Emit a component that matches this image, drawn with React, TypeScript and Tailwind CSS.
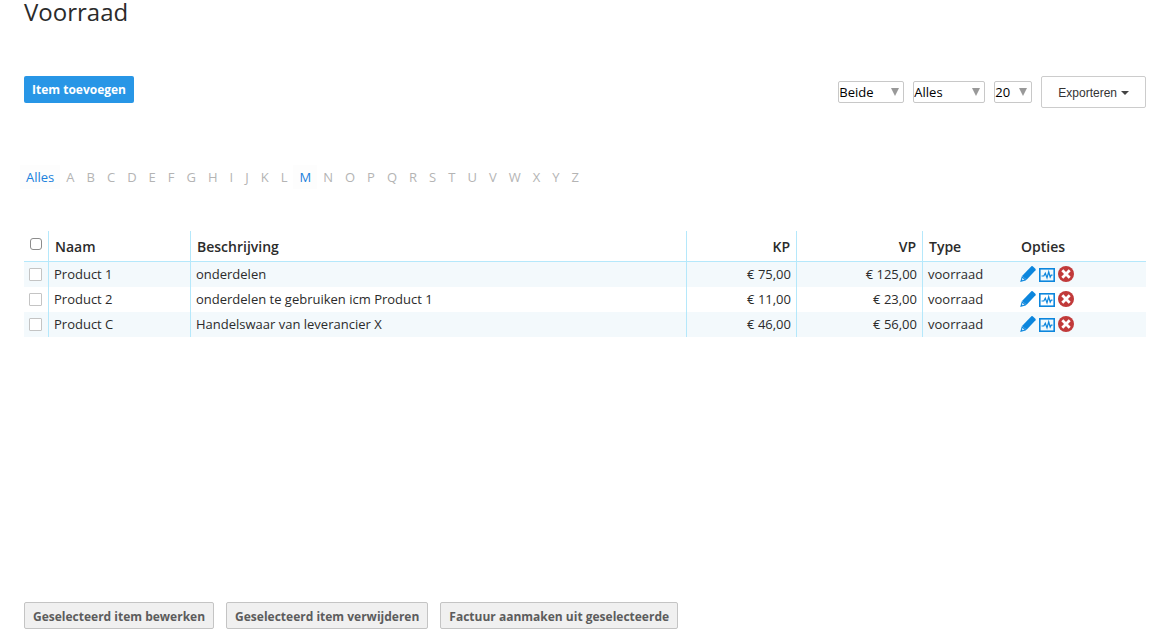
import { clsx } from "clsx";

type Product = {
  id: number;
  name: string;
  description: string;
  purchase: string;
  sale: string;
  type: string;
};

const PRODUCTS: Product[] = [
  { id: 1, name: "Product 1", description: "onderdelen", purchase: "€ 75,00", sale: "€ 125,00", type: "voorraad" },
  { id: 2, name: "Product 2", description: "onderdelen te gebruiken icm Product 1", purchase: "€ 11,00", sale: "€ 23,00", type: "voorraad" },
  { id: 3, name: "Product C", description: "Handelswaar van leverancier X", purchase: "€ 46,00", sale: "€ 56,00", type: "voorraad" },
];

const LETTERS = "ABCDEFGHIJKLMNOPQRSTUVWXYZ".split("");

const ACTIVE_LETTERS = ["M"];

const BULK_ACTIONS = ["Geselecteerd item bewerken", "Geselecteerd item verwijderen", "Factuur aanmaken uit geselecteerde"];

function PencilIcon() {
  return (
    <svg viewBox="0 0 16 16" className="h-4 w-4" fill="#0c86dd" aria-hidden="true">
      <path d="M11.4 0.3 Q12 -0.2 12.7 0.3 L15.4 2.8 Q16 3.5 15.5 4.2 L6.6 13.8 L2 9.9 Z" />
      <path d="M1.9 10 L6.5 13.8 L5.6 14.6 L0.2 15.9 Z" />
      <path d="M2.4 12 L4.5 13.8 L2.6 14.3 L1.8 13.6 Z" fill="#d5ebf9" />
    </svg>
  );
}

function GraphIcon() {
  return (
    <svg viewBox="0 0 16 14" className="h-3.5 w-4" fill="none" stroke="#0c86dd" aria-hidden="true">
      <rect x="0.8" y="0.8" width="14.4" height="12.4" strokeWidth="1.6" />
      <path d="M2.5 8 H4.8 L6.3 5.2 L8 9.8 L9.7 3.8 L11.2 9.2 L12.2 7.2 H13.5" strokeWidth="1.2" />
    </svg>
  );
}

function DeleteIcon() {
  return (
    <svg viewBox="0 0 16 16" className="h-4 w-4" aria-hidden="true">
      <circle cx="8" cy="8" r="8" fill="#c13a3a" />
      <path d="M4.3 4.3 L11.7 11.7 M11.7 4.3 L4.3 11.7" stroke="#fff" strokeWidth="2.8" />
    </svg>
  );
}

function FilterSelect({ label, options, className }: { label: string; options: string[]; className: string }) {
  return (
    <div className={clsx("relative h-[22px]", className)}>
      <select
        aria-label={label}
        className="h-full w-full appearance-none rounded-xs border border-[#c8c8c8] bg-white text-[13px] leading-5 text-black"
      >
        {options.map((o) => (
          <option key={o}>{o}</option>
        ))}
      </select>
      <svg viewBox="0 0 8 8" className="pointer-events-none absolute right-[5px] top-[7px] h-2 w-2" fill="#999" aria-hidden="true">
        <path d="M0 0 H8 L4 8 Z" />
      </svg>
    </div>
  );
}

function RowCheckbox({ label, header }: { label: string; header?: boolean }) {
  return (
    <input
      type="checkbox"
      aria-label={label}
      className={clsx(
        "block appearance-none border bg-white",
        header ? "mx-1.5 mb-1 h-3 w-3 rounded-[3px] border-[#8c8c8c]" : "mx-[5px] h-[13px] w-[13px] rounded-[1px] border-[#c4c4c4]",
      )}
    />
  );
}

export default function App() {
  return (
    <main className="bg-white px-6 font-['Open_Sans',sans-serif] text-[13px] leading-5 text-[#2b2b2b]">
      <h1 className="text-2xl leading-6">Voorraad</h1>

      <div className="mt-13 flex items-start justify-between">
        <button type="button" className="h-[27px] rounded-xs bg-[#2896e6] px-2 text-xs font-bold text-white">
          Item toevoegen
        </button>
        <div className="flex items-center gap-[9px]">
          <FilterSelect label="Status" options={["Beide", "Actief", "Inactief"]} className="w-[66px]" />
          <FilterSelect label="Type" options={["Alles", "Voorraad"]} className="w-[72px]" />
          <FilterSelect label="Aantal per pagina" options={["20", "50", "100"]} className="w-[38px]" />
          <button
            type="button"
            className="flex h-8 items-center gap-1 rounded-xs border border-[#ccc] bg-white px-4 pt-0.5 font-['Liberation_Sans',Arial,sans-serif] text-xs text-[#333]"
          >
            Exporteren
            <svg viewBox="0 0 8 4" className="h-1 w-2" fill="#444" aria-hidden="true">
              <path d="M0 0 H8 L4 4 Z" />
            </svg>
          </button>
        </div>
      </div>

      <nav aria-label="Filter op letter" className="-ml-1 mt-[57px] flex flex-wrap leading-6">
        <a href="#alles" className="bg-[#fdfdfd] px-1.5 text-[#2080dc]">
          Alles
        </a>
        {LETTERS.map((letter) =>
          ACTIVE_LETTERS.includes(letter) ? (
            <a key={letter} href={`#${letter}`} className="bg-[#fdfdfd] px-1.5 text-[#2080dc]">
              {letter}
            </a>
          ) : (
            <span key={letter} className="px-1.5 text-[#b4b4b4]">
              {letter}
            </span>
          ),
        )}
      </nav>

      <table className="mt-[42px] w-full table-fixed border-separate border-spacing-0">
        <thead>
          <tr className="h-[31px] text-left text-sm *:border-b *:border-[#b5e8fb] *:font-semibold">
            <th className="w-[25px] border-r">
              <RowCheckbox header label="Alles selecteren" />
            </th>
            <th className="w-[142px] border-r px-1.5 pt-0.5">Naam</th>
            <th className="border-r px-1.5 pt-0.5">Beschrijving</th>
            <th className="w-[110px] border-r px-1.5 pt-0.5 text-right">KP</th>
            <th className="w-[126px] border-r px-1.5 pt-0.5 text-right">VP</th>
            <th className="w-[92px] px-1.5 pt-0.5">Type</th>
            <th className="w-[131px] px-1.5 pt-0.5">Opties</th>
          </tr>
        </thead>
        <tbody>
          {PRODUCTS.map((p) => (
            <tr key={p.id} className="h-[25px] odd:bg-[#f3f9fc] *:border-[#b5e8fb]">
              <td className="border-r">
                <RowCheckbox label={`${p.name} selecteren`} />
              </td>
              <td className="border-r px-[5px] pb-0.5">{p.name}</td>
              <td className="border-r px-[5px] pb-0.5">{p.description}</td>
              <td className="border-r px-[5px] pb-0.5 text-right">{p.purchase}</td>
              <td className="border-r px-[5px] pb-0.5 text-right">{p.sale}</td>
              <td className="px-[5px] pb-0.5">{p.type}</td>
              <td className="px-[5px] pb-0.5">
                <div className="flex items-end gap-[3px]">
                  <button type="button" aria-label={`${p.name} bewerken`}>
                    <PencilIcon />
                  </button>
                  <button type="button" aria-label={`${p.name} statistieken`}>
                    <GraphIcon />
                  </button>
                  <button type="button" aria-label={`${p.name} verwijderen`}>
                    <DeleteIcon />
                  </button>
                </div>
              </td>
            </tr>
          ))}
        </tbody>
      </table>

      <div className="mt-[265px] flex flex-wrap gap-3 pb-[3px]">
        {BULK_ACTIONS.map((action) => (
          <button
            key={action}
            type="button"
            className="h-[27px] rounded-xs border border-[#c4c4c4] bg-[#f0f0f0] px-2 pt-0.5 text-xs font-bold text-[#5c5c5c]"
          >
            {action}
          </button>
        ))}
      </div>
    </main>
  );
}
